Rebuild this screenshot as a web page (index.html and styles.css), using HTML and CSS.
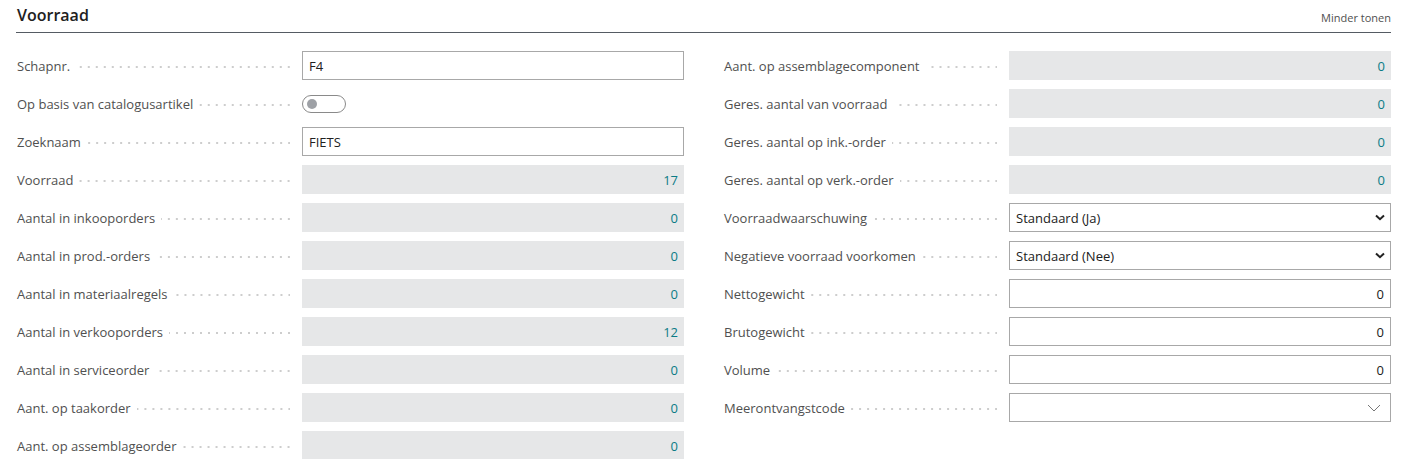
FILE: index.html
```html
<!DOCTYPE html>
<html lang="nl">
<head>
  <meta charset="UTF-8">
  <title>Voorraad</title>
  <link rel="stylesheet" href="styles.css">
</head>
<body>

  <div class="section">
    <div class="section-header">
      <h2>Voorraad</h2>
      <a class="toggle-link">Minder tonen</a>
    </div>

    <div class="columns">
      <div class="column">
        <div class="field">
          <label><span>Schapnr.</span><i class="dots"></i></label>
          <div class="control input">F4</div>
        </div>
        <div class="field">
          <label><span>Op basis van catalogusartikel</span><i class="dots"></i></label>
          <div class="control plain"><span class="switch"><span class="knob"></span></span></div>
        </div>
        <div class="field">
          <label><span>Zoeknaam</span><i class="dots"></i></label>
          <div class="control input">FIETS</div>
        </div>
        <div class="field">
          <label><span>Voorraad</span><i class="dots"></i></label>
          <div class="control readonly">17</div>
        </div>
        <div class="field">
          <label><span>Aantal in inkooporders</span><i class="dots"></i></label>
          <div class="control readonly">0</div>
        </div>
        <div class="field">
          <label><span>Aantal in prod.-orders</span><i class="dots"></i></label>
          <div class="control readonly">0</div>
        </div>
        <div class="field">
          <label><span>Aantal in materiaalregels</span><i class="dots"></i></label>
          <div class="control readonly">0</div>
        </div>
        <div class="field">
          <label><span>Aantal in verkooporders</span><i class="dots"></i></label>
          <div class="control readonly">12</div>
        </div>
        <div class="field">
          <label><span>Aantal in serviceorder</span><i class="dots"></i></label>
          <div class="control readonly">0</div>
        </div>
        <div class="field">
          <label><span>Aant. op taakorder</span><i class="dots"></i></label>
          <div class="control readonly">0</div>
        </div>
        <div class="field">
          <label><span>Aant. op assemblageorder</span><i class="dots"></i></label>
          <div class="control readonly">0</div>
        </div>
      </div>

      <div class="column">
        <div class="field">
          <label><span>Aant. op assemblagecomponent</span><i class="dots"></i></label>
          <div class="control readonly">0</div>
        </div>
        <div class="field">
          <label><span>Geres. aantal van voorraad</span><i class="dots"></i></label>
          <div class="control readonly">0</div>
        </div>
        <div class="field">
          <label><span>Geres. aantal op ink.-order</span><i class="dots"></i></label>
          <div class="control readonly">0</div>
        </div>
        <div class="field">
          <label><span>Geres. aantal op verk.-order</span><i class="dots"></i></label>
          <div class="control readonly">0</div>
        </div>
        <div class="field">
          <label><span>Voorraadwaarschuwing</span><i class="dots"></i></label>
          <div class="control input select">Standaard (Ja)
            <svg class="chevron" width="10" height="7" viewBox="0 0 10 7"><path d="M1 1.5 L5 5.2 L9 1.5" fill="none" stroke="#222" stroke-width="2"/></svg>
          </div>
        </div>
        <div class="field">
          <label><span>Negatieve voorraad voorkomen</span><i class="dots"></i></label>
          <div class="control input select">Standaard (Nee)
            <svg class="chevron" width="10" height="7" viewBox="0 0 10 7"><path d="M1 1.5 L5 5.2 L9 1.5" fill="none" stroke="#222" stroke-width="2"/></svg>
          </div>
        </div>
        <div class="field">
          <label><span>Nettogewicht</span><i class="dots"></i></label>
          <div class="control input number">0</div>
        </div>
        <div class="field">
          <label><span>Brutogewicht</span><i class="dots"></i></label>
          <div class="control input number">0</div>
        </div>
        <div class="field">
          <label><span>Volume</span><i class="dots"></i></label>
          <div class="control input number">0</div>
        </div>
        <div class="field">
          <label><span>Meerontvangstcode</span><i class="dots"></i></label>
          <div class="control input lookup">
            <svg class="chevron thin" width="14" height="8" viewBox="0 0 14 8"><path d="M1 1 L7 7 L13 1" fill="none" stroke="#777" stroke-width="1"/></svg>
          </div>
        </div>
      </div>
    </div>
  </div>

</body>
</html>
```

FILE: styles.css
```css
body {
  margin: 0;
  font-family: "Open Sans", sans-serif;
  font-size: 13px;
  color: #212121;
  background: #fff;
}
.section {
  padding: 0 12px 0 16px;
}
.section-header {
  display: flex;
  justify-content: space-between;
  align-items: flex-end;
  height: 32px;
  border-bottom: 1px solid #555b63;
}
.section-header h2 {
  margin: 0 0 6px 1px;
  font-size: 16px;
  font-weight: 600;
  color: #212121;
}
.toggle-link {
  font-size: 11px;
  color: #505050;
  margin-bottom: 7px;
}
.columns {
  display: grid;
  grid-template-columns: 1fr 1fr;
  column-gap: 40px;
  padding: 18px 0 0 1px;
}
.column {
  display: flex;
  flex-direction: column;
  gap: 9px;
}
.field {
  display: grid;
  grid-template-columns: 285px 1fr;
  height: 29px;
}
.field label {
  display: flex;
  align-items: center;
  color: #505050;
  padding-right: 12px;
  white-space: nowrap;
}
/* leader dots, 2px squares every 8px, lined up on the right */
.dots {
  flex: 1;
  height: 2px;
  margin: 2px 0 0 6px;
  background-image: linear-gradient(to right, transparent 6px, #cdcdcd 6px);
  background-size: 8px 2px;
  background-position: right center;
  background-repeat: repeat-x;
}
.control {
  display: flex;
  align-items: center;
  box-sizing: border-box;
  height: 29px;
  padding: 0 6px;
}
.plain {
  padding: 0;
}
.input {
  border: 1px solid #a8a8a8;
  background: #fff;
}
.readonly {
  background: #e6e7e8;
  color: #0b7b86;
  justify-content: flex-end;
}
.number {
  justify-content: flex-end;
}
.select {
  justify-content: space-between;
  padding-right: 5px;
}
.lookup {
  justify-content: flex-end;
  padding-right: 9px;
}
.chevron.thin {
  margin-top: 1px;
}
.switch {
  position: relative;
  display: inline-block;
  width: 42px;
  height: 16px;
  border: 1px solid #8a8a8a;
  border-radius: 10px;
  background: #fff;
}
.knob {
  position: absolute;
  left: 4px;
  top: 3px;
  width: 10px;
  height: 10px;
  border-radius: 50%;
  background: #9ea1a6;
}
```
